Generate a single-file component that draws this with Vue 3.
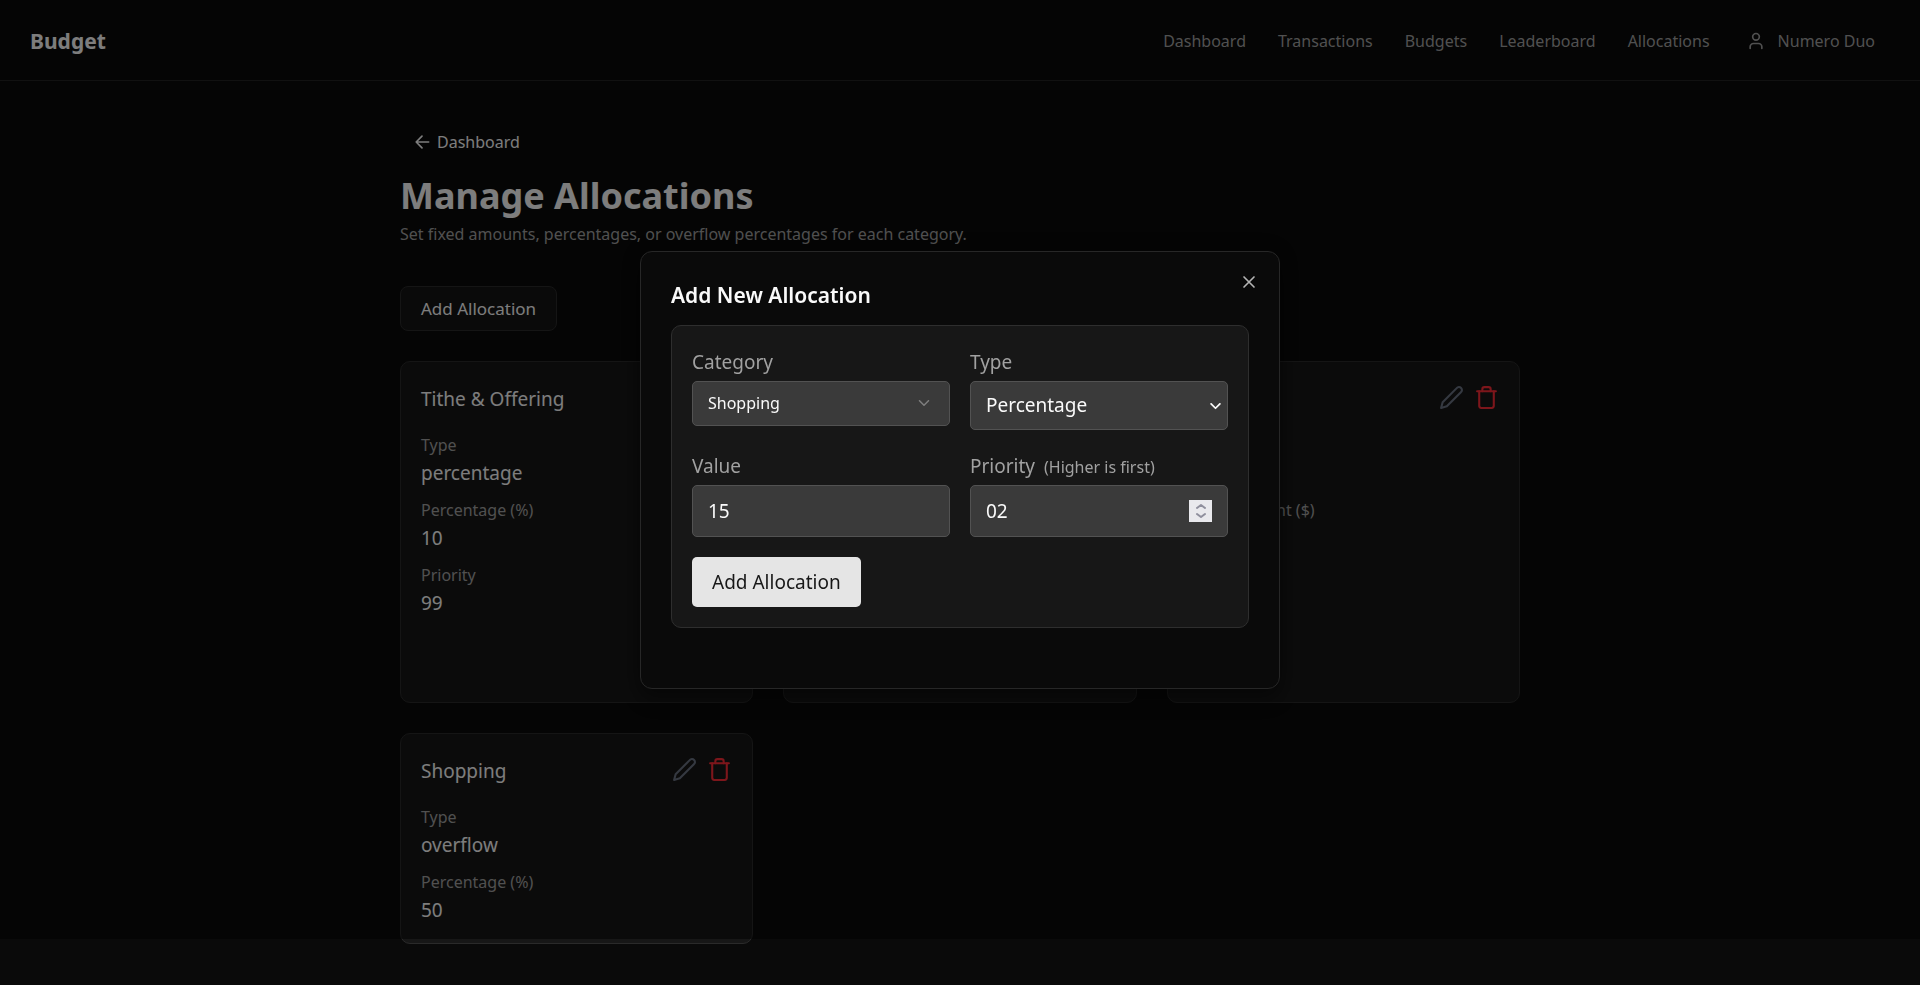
<script setup>
import { ref } from 'vue'

const links = ['Dashboard', 'Transactions', 'Budgets', 'Leaderboard', 'Allocations']

const allocations = [
  {
    id: 1,
    name: 'Tithe & Offering',
    rows: [
      { label: 'Type', value: 'percentage' },
      { label: 'Percentage (%)', value: '10' },
      { label: 'Priority', value: '99' },
    ],
  },
  { id: 2, name: '', rows: [] },
  {
    id: 3,
    name: '',
    rows: [
      { label: 'Type', value: 'fixed' },
      { label: 'Fixed Amount ($)', value: '' },
    ],
  },
  {
    id: 4,
    name: 'Shopping',
    rows: [
      { label: 'Type', value: 'overflow' },
      { label: 'Percentage (%)', value: '50' },
    ],
  },
]

const category = ref('Shopping')
const type = ref('Percentage')
const amount = ref('15')
const priority = ref('02')
</script>

<template>
  <div class="page">
    <header class="topbar">
      <a class="brand" href="#">Budget</a>
      <nav class="nav">
        <a v-for="link in links" :key="link" href="#">{{ link }}</a>
        <button class="user" type="button">
          <svg class="user-icon" viewBox="0 0 24 24" aria-hidden="true">
            <path d="M19 21v-2a4 4 0 0 0-4-4H9a4 4 0 0 0-4 4v2" />
            <circle cx="12" cy="7" r="4" />
          </svg>
          <span>Numero Duo</span>
        </button>
      </nav>
    </header>

    <main class="content">
      <a class="back" href="#">
        <svg class="back-icon" viewBox="0 0 24 24" aria-hidden="true">
          <path d="m12 19-7-7 7-7M20 12H5" />
        </svg>
        <span>Dashboard</span>
      </a>
      <h1>Manage Allocations</h1>
      <p class="subtitle">Set fixed amounts, percentages, or overflow percentages for each category.</p>
      <button class="open-dialog" type="button">Add Allocation</button>

      <section class="cards">
        <article v-for="item in allocations" :key="item.id" class="card">
          <div class="card-head">
            <h2>{{ item.name }}</h2>
            <div class="actions">
              <button class="edit" type="button" aria-label="Edit">
                <svg viewBox="0 0 24 24" aria-hidden="true">
                  <path d="M17 3a2.85 2.83 0 1 1 4 4L7.5 20.5 2 22l1.5-5.5Z" />
                </svg>
              </button>
              <button class="delete" type="button" aria-label="Delete">
                <svg viewBox="0 0 24 24" aria-hidden="true">
                  <path d="M3 6h18" />
                  <path d="M19 6v14c0 1-1 2-2 2H7c-1 0-2-1-2-2V6" />
                  <path d="M8 6V4c0-1 1-2 2-2h4c1 0 2 1 2 2v2" />
                </svg>
              </button>
            </div>
          </div>
          <dl>
            <div v-for="row in item.rows" :key="row.label" class="row">
              <dt>{{ row.label }}</dt>
              <dd>{{ row.value }}</dd>
            </div>
          </dl>
        </article>
      </section>
    </main>

    <div class="backdrop">
      <div class="dialog" role="dialog" aria-modal="true" aria-labelledby="dialog-title">
        <button class="close" type="button" aria-label="Close">
          <svg viewBox="0 0 24 24" aria-hidden="true"><path d="M18 6 6 18M6 6l12 12" /></svg>
        </button>
        <h2 id="dialog-title" class="dialog-title">Add New Allocation</h2>
        <form class="form" @submit.prevent>
          <div class="field">
            <label for="category">Category</label>
            <div class="control">
              <select id="category" v-model="category" class="category">
                <option>Shopping</option>
              </select>
              <svg class="chevron" viewBox="0 0 24 24" aria-hidden="true"><path d="m6 9 6 6 6-6" /></svg>
            </div>
          </div>
          <div class="field">
            <label for="type">Type</label>
            <div class="control">
              <select id="type" v-model="type" class="type">
                <option>Percentage</option>
              </select>
              <svg class="arrow" viewBox="0 0 12 8" aria-hidden="true"><path d="m1 1 5 5 5-5" /></svg>
            </div>
          </div>
          <div class="field">
            <label for="amount">Value</label>
            <input id="amount" v-model="amount" type="number" />
          </div>
          <div class="field">
            <label for="priority">Priority <span class="hint">(Higher is first)</span></label>
            <div class="control">
              <input id="priority" v-model="priority" type="number" />
              <span class="spinner" aria-hidden="true">
                <svg viewBox="0 0 23 22">
                  <path d="m8 8 4-3 4 3M8 14l4 3 4-3" />
                </svg>
              </span>
            </div>
          </div>
          <button class="submit" type="submit">Add Allocation</button>
        </form>
      </div>
    </div>
  </div>
</template>

<style>
body {
  background: #0a0a0a;
}
</style>

<style scoped>
.page {
  font-family: "Noto Sans", "Open Sans", sans-serif;
  font-size: 19px;
  line-height: 30px;
  color: #fafafa;
  min-height: 100vh;
}

* {
  box-sizing: border-box;
}

a {
  color: inherit;
  text-decoration: none;
}

button,
input,
select {
  font: inherit;
  color: inherit;
  margin: 0;
}

button {
  background: none;
  border: 0;
  padding: 0;
  cursor: pointer;
}

svg {
  display: block;
  fill: none;
  stroke: currentColor;
  stroke-width: 2;
  stroke-linecap: round;
  stroke-linejoin: round;
}

h1,
h2,
p,
dl,
dd {
  margin: 0;
}

.topbar {
  display: flex;
  align-items: center;
  justify-content: space-between;
  height: 81px;
  padding: 2px 45px 0 30px;
  border-bottom: 1px solid #222222;
}

.brand {
  font-size: 21px;
  font-weight: 700;
}

.nav {
  display: flex;
  align-items: center;
  gap: 32px;
  font-size: 16px;
  color: #a1a1a1;
}

.user {
  display: flex;
  align-items: center;
  gap: 12px;
  padding-left: 4px;
}

.user-icon {
  width: 20px;
  height: 20px;
}

.content {
  max-width: 1120px;
  margin: 0 auto;
  padding: 40px 0;
}

.back {
  display: flex;
  align-items: center;
  gap: 5px;
  width: max-content;
  height: 42px;
  padding: 0 12px;
  font-size: 16px;
}

.back-icon {
  width: 20px;
  height: 20px;
}

h1 {
  margin-top: 8px;
  font-size: 36px;
  line-height: 50px;
  font-weight: 700;
}

.subtitle {
  font-size: 16px;
  line-height: 27px;
  color: #a1a1a1;
}

.open-dialog {
  display: block;
  height: 45px;
  margin: 38px 0 30px;
  padding: 0 20px;
  font-size: 17px;
  background: #141414;
  border: 1px solid #2a2a2a;
  border-radius: 8px;
}

.cards {
  display: grid;
  grid-template-columns: repeat(3, 1fr);
  grid-template-rows: minmax(342px, auto);
  gap: 30px;
}

.card {
  padding: 20px 20px 18px;
  background: #171717;
  border: 1px solid #2a2a2a;
  border-radius: 10px;
}

.card-head {
  display: flex;
  justify-content: space-between;
  height: 51px;
}

.card h2 {
  font-size: 19px;
  line-height: 35px;
  font-weight: 400;
}

.actions {
  display: flex;
  gap: 10px;
  height: 30px;
  align-items: center;
}

.actions svg {
  width: 25px;
  height: 25px;
}

.edit {
  color: #6a7282;
}

.delete {
  color: #fb2c36;
}

dl {
  display: flex;
  flex-direction: column;
  gap: 10px;
}

dt {
  font-size: 16px;
  line-height: 25px;
  color: #a1a1a1;
}

dd {
  min-height: 30px;
}

.backdrop {
  position: fixed;
  inset: 0 0 46px;
  display: flex;
  align-items: center;
  justify-content: center;
  background: rgba(0, 0, 0, 0.5);
}

.dialog {
  position: relative;
  width: 100%;
  max-width: 640px;
  padding: 30px 30px 60px;
  background: #0a0a0a;
  border: 1px solid #272727;
  border-radius: 12px;
  box-shadow: 0 12px 20px rgba(0, 0, 0, 0.3), 0 0 20px rgba(0, 0, 0, 0.3);
}

.close {
  position: absolute;
  top: 20px;
  right: 20px;
  color: #b5b5b5;
}

.close svg {
  width: 20px;
  height: 20px;
}

.dialog-title {
  margin-bottom: 16px;
  font-size: 21px;
  line-height: 27px;
  font-weight: 600;
}

.form {
  display: grid;
  grid-template-columns: 1fr 1fr;
  gap: 20px;
  align-items: start;
  padding: 20px;
  background: #171717;
  border: 1px solid #2e2e2e;
  border-radius: 10px;
}

.field {
  display: flex;
  flex-direction: column;
  gap: 3px;
}

label {
  line-height: 32px;
  color: #a1a1a1;
}

.hint {
  margin-left: 4px;
  font-size: 16px;
  line-height: 20px;
}

.control {
  position: relative;
}

input,
select {
  display: block;
  width: 100%;
  padding: 0 15px;
  background: #3a3a3a;
  border: 1px solid #525252;
  border-radius: 5px;
  appearance: none;
}

input {
  height: 52px;
  appearance: textfield;
}

input::-webkit-inner-spin-button {
  appearance: none;
  margin: 0;
}

.category {
  height: 45px;
  font-size: 16px;
}

.type {
  height: 49px;
}

.chevron {
  position: absolute;
  top: 13px;
  right: 17px;
  width: 18px;
  height: 18px;
  opacity: 0.35;
}

.arrow {
  position: absolute;
  top: 22px;
  right: 7px;
  width: 11px;
  height: 7px;
}

.spinner {
  position: absolute;
  top: 15px;
  right: 16px;
  background: #e9e9ed;
  color: #8f8f9d;
}

.spinner svg {
  width: 23px;
  height: 22px;
}

.submit {
  justify-self: start;
  height: 50px;
  padding: 0 20px;
  color: #171717;
  background: #e5e5e5;
  border-radius: 5px;
}
</style>
